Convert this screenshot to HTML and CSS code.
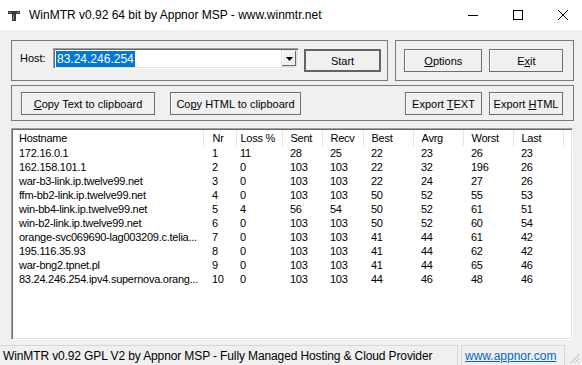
FILE: index.html
```html
<!DOCTYPE html>
<html lang="en">
<head>
  <meta charset="UTF-8" />
  <title>WinMTR</title>
  <link rel="stylesheet" href="styles.css">
</head>
<body>
  <div class="window">
    <!-- Title bar -->
    <div class="titlebar">
      <svg class="app-icon" width="12" height="10" viewBox="0 0 12 10">
        <rect x="0" y="0" width="12" height="3" fill="#3a3a3a"/>
        <rect x="1" y="1" width="2" height="1" fill="#9a9a9a"/>
        <rect x="9" y="1" width="2" height="1" fill="#9a9a9a"/>
        <rect x="4" y="3" width="4" height="7" fill="#3a3a3a"/>
        <rect x="5" y="4" width="1" height="5" fill="#8a8a8a"/>
      </svg>
      <span class="title">WinMTR v0.92 64 bit by Appnor MSP - www.winmtr.net</span>
      <div class="caption-buttons">
        <span class="cap-btn">
          <svg width="10" height="10" viewBox="0 0 10 10"><path d="M0 5.5h10" stroke="#000" stroke-width="1"/></svg>
        </span>
        <span class="cap-btn">
          <svg width="10" height="10" viewBox="0 0 10 10"><rect x="0.5" y="0.5" width="9" height="9" fill="none" stroke="#000"/></svg>
        </span>
        <span class="cap-btn">
          <svg width="10" height="10" viewBox="0 0 10 10"><path d="M0 0L10 10M10 0L0 10" stroke="#000" stroke-width="1"/></svg>
        </span>
      </div>
    </div>

    <div class="client">
      <div class="top-row">
        <div class="group host-group">
          <span class="host-label">Host:</span>
          <div class="combo">
            <span class="combo-text"><span class="selected">83.24.246.254</span></span>
            <span class="combo-drop">
              <svg width="7" height="4" viewBox="0 0 7 4"><path d="M0 0h7L3.5 4z" fill="#000"/></svg>
            </span>
          </div>
          <button class="btn btn-default start-btn">Start</button>
        </div>
        <div class="group action-group">
          <button class="btn options-btn"><u>O</u>ptions</button>
          <button class="btn exit-btn">E<u>x</u>it</button>
        </div>
      </div>

      <div class="group copy-group">
        <button class="btn copy-text-btn"><u>C</u>opy Text to clipboard</button>
        <button class="btn copy-html-btn">Co<u>p</u>y HTML to clipboard</button>
        <span class="spacer"></span>
        <button class="btn export-text-btn">Export <u>T</u>EXT</button>
        <button class="btn export-html-btn">Export <u>H</u>TML</button>
      </div>

      <div class="list">
        <table class="hops">
          <colgroup>
            <col style="width:190px"><col style="width:33px"><col style="width:46px">
            <col style="width:40px"><col style="width:41px"><col style="width:50px">
            <col style="width:50px"><col style="width:50px"><col style="width:50px">
            <col>
          </colgroup>
          <thead>
            <tr>
              <th>Hostname</th><th>Nr</th><th>Loss %</th><th>Sent</th><th>Recv</th>
              <th>Best</th><th>Avrg</th><th>Worst</th><th>Last</th><th></th>
            </tr>
          </thead>
          <tbody>
            <tr><td>172.16.0.1</td><td>1</td><td>11</td><td>28</td><td>25</td><td>22</td><td>23</td><td>26</td><td>23</td><td></td></tr>
            <tr><td>162.158.101.1</td><td>2</td><td>0</td><td>103</td><td>103</td><td>22</td><td>32</td><td>196</td><td>26</td><td></td></tr>
            <tr><td>war-b3-link.ip.twelve99.net</td><td>3</td><td>0</td><td>103</td><td>103</td><td>22</td><td>24</td><td>27</td><td>26</td><td></td></tr>
            <tr><td>ffm-bb2-link.ip.twelve99.net</td><td>4</td><td>0</td><td>103</td><td>103</td><td>50</td><td>52</td><td>55</td><td>53</td><td></td></tr>
            <tr><td>win-bb4-link.ip.twelve99.net</td><td>5</td><td>4</td><td>56</td><td>54</td><td>50</td><td>52</td><td>61</td><td>51</td><td></td></tr>
            <tr><td>win-b2-link.ip.twelve99.net</td><td>6</td><td>0</td><td>103</td><td>103</td><td>50</td><td>52</td><td>60</td><td>54</td><td></td></tr>
            <tr><td>orange-svc069690-lag003209.c.telia...</td><td>7</td><td>0</td><td>103</td><td>103</td><td>41</td><td>44</td><td>61</td><td>42</td><td></td></tr>
            <tr><td>195.116.35.93</td><td>8</td><td>0</td><td>103</td><td>103</td><td>41</td><td>44</td><td>62</td><td>42</td><td></td></tr>
            <tr><td>war-bng2.tpnet.pl</td><td>9</td><td>0</td><td>103</td><td>103</td><td>41</td><td>44</td><td>65</td><td>46</td><td></td></tr>
            <tr><td>83.24.246.254.ipv4.supernova.orang...</td><td>10</td><td>0</td><td>103</td><td>103</td><td>44</td><td>46</td><td>48</td><td>46</td><td></td></tr>
          </tbody>
        </table>
      </div>
    </div>

    <!-- Status bar -->
    <div class="statusbar">
      <div class="panel panel-main">WinMTR v0.92 GPL V2 by Appnor MSP - Fully Managed Hosting &amp; Cloud Provider</div>
      <div class="panel panel-link"><a href="#">www.appnor.com</a></div>
      <svg class="gripper" width="12" height="12" viewBox="0 0 12 12">
        <g fill="#b0b0b0">
          <rect x="10" y="2" width="1" height="1"/>
          <rect x="8" y="4" width="1" height="1"/><rect x="10" y="6" width="1" height="1"/>
          <rect x="6" y="6" width="1" height="1"/><rect x="8" y="8" width="1" height="1"/>
          <rect x="4" y="8" width="1" height="1"/><rect x="10" y="10" width="1" height="1"/>
          <rect x="2" y="10" width="1" height="1"/><rect x="6" y="10" width="1" height="1"/>
        </g>
        <path d="M11 2.5L2.5 11M11 6.5L6.5 11" stroke="#c8c8c8" stroke-width="1"/>
      </svg>
    </div>
  </div>
</body>
</html>
```

FILE: styles.css
```css
* {
  box-sizing: border-box;
}

html, body {
  margin: 0;
  background: #f0f0f0;
}

body {
  width: 582px;
  height: 365px;
  overflow: hidden;
  font-family: 'Liberation Sans', Arial, sans-serif;
  font-size: 11px;
  color: #000;
}

.window {
  display: flex;
  flex-direction: column;
  width: 582px;
  height: 365px;
}

/* Title bar */
.titlebar {
  height: 30px;
  flex: none;
  background: #fff;
  display: flex;
  align-items: center;
  padding-left: 8px;
}

.app-icon {
  flex: none;
  margin-top: 2px;
}

.title {
  margin-left: 9px;
  font-size: 12px;
  white-space: nowrap;
}

.caption-buttons {
  margin-left: auto;
  margin-right: -3px;
  display: flex;
  height: 30px;
}

.cap-btn {
  width: 45px;
  display: flex;
  align-items: center;
  justify-content: center;
}

/* Client area */
.client {
  flex: 1;
  padding: 10px 8px 5px 11px;
  display: flex;
  flex-direction: column;
}

.top-row {
  display: flex;
  gap: 7px;
}

.group {
  border: 1px solid #7a7a7a;
  display: flex;
  align-items: flex-start;
}

.host-group {
  width: 378px;
  height: 41px;
  padding-left: 8px;
}

.action-group {
  width: 179px;
  height: 41px;
  padding-left: 8px;
  gap: 7px;
}

.copy-group {
  margin-top: 4px;
  height: 36px;
  padding: 0 10px 0 9px;
}

.spacer {
  flex: 1;
}

.host-label {
  width: 33px;
  margin-top: 11px;
}

/* Host combo box */
.combo {
  width: 246px;
  height: 21px;
  margin-top: 7px;
  background: #fff;
  border-top: 1px solid #a0a0a0;
  border-left: 1px solid #a0a0a0;
  border-right: 1px solid #fff;
  border-bottom: 1px solid #fff;
  box-shadow: inset 1px 1px 0 #696969, inset -1px -1px 0 #e3e3e3;
  display: flex;
  align-items: center;
  padding: 0 1px 0 2px;
}

.combo-text {
  flex: 1;
  font-size: 12px;
}

.selected {
  background: #0078d7;
  color: #fff;
  padding: 1px 1px;
}

.combo-drop {
  width: 16px;
  height: 17px;
  background: #f0f0f0;
  border: 1px solid #e3e3e3;
  box-shadow: inset -1px -1px 0 #696969, inset 1px 1px 0 #fff;
  display: flex;
  align-items: center;
  justify-content: center;
}

/* Buttons */
.btn {
  font-family: 'Liberation Sans', Arial, sans-serif;
  font-size: 11px;
  color: #000;
  background: #f0f0f0;
  border: 1px solid #6f6f6f;
  box-shadow: inset 1px 1px 0 #fff;
  padding: 0;
  height: 23px;
  white-space: nowrap;
}

.btn-default {
  border: 2px solid #646464;
  box-shadow: none;
}

.start-btn {
  width: 77px;
  margin-top: 8px;
  margin-left: 5px;
}

.options-btn {
  width: 78px;
  margin-top: 8px;
}

.exit-btn {
  width: 74px;
  margin-top: 8px;
}

.copy-group .btn {
  margin-top: 6px;
}

.copy-text-btn {
  width: 134px;
}

.copy-html-btn {
  width: 131px;
  margin-left: 15px;
}

.export-text-btn {
  width: 77px;
}

.export-html-btn {
  width: 74px;
  margin-left: 7px;
}

/* Hop list */
.list {
  margin-top: 7px;
  width: 562px;
  height: 212px;
  background: #fff;
  border-top: 1px solid #a0a0a0;
  border-left: 1px solid #a0a0a0;
  border-right: 1px solid #fff;
  border-bottom: 1px solid #fff;
  box-shadow: inset 1px 1px 0 #696969, inset -1px -1px 0 #e3e3e3;
  padding: 1px 0 0 1px;
  overflow: hidden;
}

.hops {
  border-collapse: collapse;
  table-layout: fixed;
  width: 559px;
  letter-spacing: -0.25px;
}

.hops th {
  height: 16px;
  font-weight: normal;
  text-align: left;
  border-right: 1px solid #e5e5e5;
  padding: 0 0 1px 6px;
  white-space: nowrap;
}

.hops td {
  height: 14px;
  line-height: 14px;
  padding: 0 0 0 6px;
  white-space: nowrap;
  overflow: hidden;
}

.hops th:nth-child(2), .hops td:nth-child(2) {
  padding-left: 9px;
}

.hops th:nth-child(3), .hops td:nth-child(3) {
  padding-left: 4px;
}

.hops th:nth-child(n+4), .hops td:nth-child(n+4) {
  padding-left: 8px;
}

/* Status bar */
.statusbar {
  height: 20px;
  flex: none;
  display: flex;
  font-size: 12px;
}

.panel {
  border-top: 1px solid #d7d7d7;
  border-right: 1px solid #d7d7d7;
  padding: 3px 0 0 3px;
  white-space: nowrap;
}

.panel-main {
  width: 458px;
  letter-spacing: -0.12px;
}

.panel-link {
  width: 104px;
  margin-left: 3px;
  border-left: 1px solid #d7d7d7;
}

.panel-link a {
  color: #0066cc;
}

.gripper {
  margin-left: auto;
  margin-top: 7px;
  margin-right: 2px;
}
```
